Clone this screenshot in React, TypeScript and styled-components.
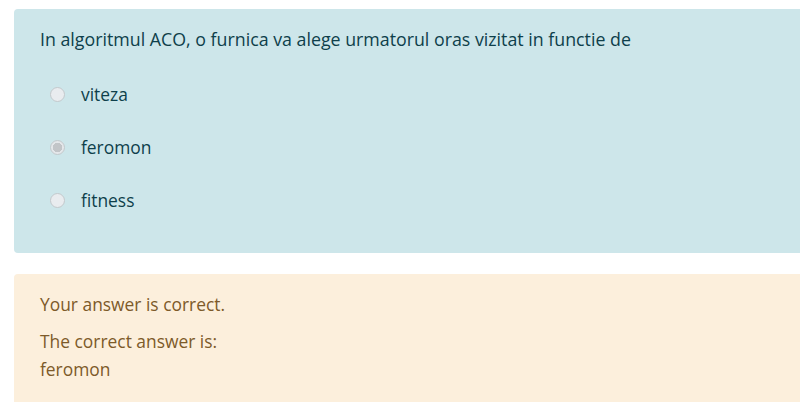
import styled, { createGlobalStyle } from "styled-components";

const Global = createGlobalStyle`
  body {
    margin: 0;
    background: #ffffff;
    font-family: "Open Sans", "Noto Sans", sans-serif;
  }
`;

const Page = styled.div`
  padding: 9px 0 0 14px;
  display: flex;
  flex-direction: column;
  gap: 21px;
`;

const Formulation = styled.div`
  background-color: #cde6ea;
  color: #0e3f4b;
  border-radius: 4px 0 0 4px;
  padding: 16px 26px 0 26px;
  height: 244px;
  box-sizing: border-box;
`;

const QText = styled.div`
  font-size: 17.8px;
  line-height: 28px;
  margin-bottom: 27px;
`;

const Answers = styled.div`
  display: flex;
  flex-direction: column;
  gap: 25px;
`;

const Option = styled.label`
  display: flex;
  align-items: center;
  gap: 16px;
  padding-left: 10px;
  font-size: 17.4px;
  line-height: 28px;
`;

const Radio = styled.span<{ $checked?: boolean }>`
  width: 15px;
  height: 15px;
  border-radius: 50%;
  border: 1px solid #c3c9cc;
  background: ${(p) =>
    p.$checked
      ? "radial-gradient(circle, #c2c5c8 0 4.5px, #e4e7ea 5px)"
      : "#e9ecef"};
  box-sizing: border-box;
  flex: none;
`;

const Outcome = styled.div`
  background-color: #fcefdc;
  color: #7d5a29;
  border-radius: 4px 0 0 0;
  padding: 16px 26px 20px 26px;
  min-height: 128px;
  box-sizing: border-box;
  font-size: 17.4px;
  line-height: 28px;
`;

const Feedback = styled.div`
  margin-bottom: 9px;
`;

const answers = [
  { id: 1, text: "viteza", checked: false },
  { id: 2, text: "feromon", checked: true },
  { id: 3, text: "fitness", checked: false },
];

function App() {
  return (
    <>
      <Global />
      <Page>
        <Formulation>
          <QText>
            In algoritmul ACO, o furnica va alege urmatorul oras vizitat in
            functie de
          </QText>
          <Answers>
            {answers.map((a) => (
              <Option key={a.id}>
                <Radio $checked={a.checked} />
                <span>{a.text}</span>
              </Option>
            ))}
          </Answers>
        </Formulation>
        <Outcome>
          <Feedback>Your answer is correct.</Feedback>
          <div>The correct answer is:</div>
          <div>feromon</div>
        </Outcome>
      </Page>
    </>
  );
}

export default App;
